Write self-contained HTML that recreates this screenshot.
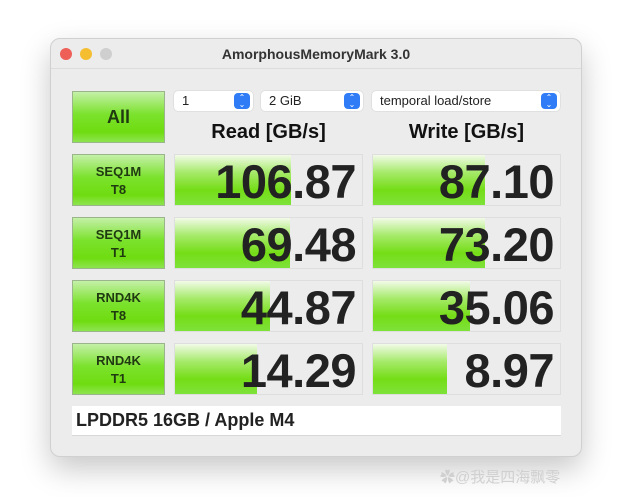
<!DOCTYPE html>
<html><head><meta charset="utf-8"><style>
*{box-sizing:border-box;margin:0;padding:0}
body{width:640px;height:497px;background:#fff;position:relative;overflow:hidden;font-family:"Liberation Sans","Noto Sans CJK SC",sans-serif}
.win{position:absolute;left:50px;top:38px;width:532px;height:419px;background:#ececec;border-radius:10px;border:1px solid #d0d0d0;box-shadow:0 12px 30px rgba(0,0,0,.22)}
.title{position:absolute;left:0;top:0;width:100%;height:30px;border-bottom:1px solid #dcdcdc;text-align:center;font-weight:bold;font-size:14px;line-height:30px;color:#333}
.dot{position:absolute;top:9px;width:12px;height:12px;border-radius:50%}
.btn{position:absolute;left:21px;width:93px;height:52px;border:1px solid #9ab58a;background:linear-gradient(#c4f0a8 0%,#7be22c 45%,#6fdc10 80%,#8ee450 100%);text-align:center;font-weight:bold;color:#1f3a10;font-size:13px;line-height:18px;padding-top:8px}
.cell{position:absolute;width:189px;height:52px;background:#ececec;border:1px solid #dedede;overflow:hidden}
.bar{position:absolute;left:0;top:0;height:100%;background:linear-gradient(#f2fbe8 0%,#a6ea6a 35%,#74dd16 70%,#7ee23a 100%)}
.num{position:absolute;right:6px;top:-1px;font-size:47px;font-weight:bold;color:#222;letter-spacing:-0.5px}
.sel{position:absolute;top:52px;height:20px;background:#fff;border-radius:4px;box-shadow:0 0 1px rgba(0,0,0,.3);font-size:13px;line-height:20px;padding-left:8px;color:#222}
.sel i{position:absolute;right:3px;top:2px;width:16px;height:16px;border-radius:4px;background:#2f7cf6;color:#fff;font-style:normal;font-size:8px;line-height:7px;text-align:center;padding-top:1px}
.hd{position:absolute;top:82px;font-size:20px;font-weight:bold;color:#111;text-align:center;width:189px}
</style></head><body>
<div class="win">
<div class="title">AmorphousMemoryMark 3.0</div>
<div class="dot" style="left:9px;background:#ee5f57"></div>
<div class="dot" style="left:29px;background:#f5bd30"></div>
<div class="dot" style="left:49px;background:#cfcfcf"></div>
<div class="btn" style="top:52px;font-size:18px;padding-top:16px">All</div>
<div class="sel" style="left:123px;width:79px">1<i>⌃<br>⌄</i></div>
<div class="sel" style="left:210px;width:102px">2 GiB<i>⌃<br>⌄</i></div>
<div class="sel" style="left:321px;width:188px">temporal load/store<i>⌃<br>⌄</i></div>
<div class="hd" style="left:123px">Read [GB/s]</div>
<div class="hd" style="left:321px">Write [GB/s]</div>

<div class="btn" style="top:115px">SEQ1M<br>T8</div>
<div class="cell" style="left:123px;top:115px"><div class="bar" style="width:116px"></div><div class="num">106.87</div></div>
<div class="cell" style="left:321px;top:115px"><div class="bar" style="width:112px"></div><div class="num">87.10</div></div>

<div class="btn" style="top:178px">SEQ1M<br>T1</div>
<div class="cell" style="left:123px;top:178px"><div class="bar" style="width:115px"></div><div class="num">69.48</div></div>
<div class="cell" style="left:321px;top:178px"><div class="bar" style="width:112px"></div><div class="num">73.20</div></div>

<div class="btn" style="top:241px">RND4K<br>T8</div>
<div class="cell" style="left:123px;top:241px"><div class="bar" style="width:95px"></div><div class="num">44.87</div></div>
<div class="cell" style="left:321px;top:241px"><div class="bar" style="width:97px"></div><div class="num">35.06</div></div>

<div class="btn" style="top:304px">RND4K<br>T1</div>
<div class="cell" style="left:123px;top:304px"><div class="bar" style="width:82px"></div><div class="num">14.29</div></div>
<div class="cell" style="left:321px;top:304px"><div class="bar" style="width:74px"></div><div class="num">8.97</div></div>

<div style="position:absolute;left:21px;top:367px;width:489px;height:30px;background:#fff;border-bottom:1px solid #d8d8d8;font-size:18px;font-weight:bold;line-height:29px;padding-left:4px;color:#222">LPDDR5 16GB / Apple M4</div>
</div>
<div style="position:absolute;left:440px;top:466px;font-size:15px;color:#d0d0d0">✿@我是四海飘零</div>
</body></html>
